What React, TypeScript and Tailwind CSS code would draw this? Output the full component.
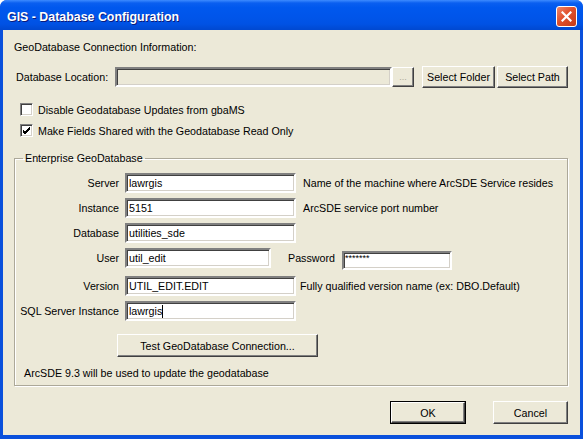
import React from "react";

const sunken =
  "border-2 border-t-[#808080] border-l-[#808080] border-b-white border-r-white shadow-[inset_1px_1px_0_#404040,inset_-1px_-1px_0_#d4d0c8]";
const raised =
  "border border-t-white border-l-white border-b-[#404040] border-r-[#404040] shadow-[inset_-1px_-1px_0_#808080] bg-[#ece9d8]";

function Check({ checked }: { checked?: boolean }) {
  return (
    <div className={`w-[13px] h-[13px] bg-white border border-t-[#808080] border-l-[#808080] border-b-white border-r-white shadow-[inset_1px_1px_0_#404040,inset_-1px_-1px_0_#d4d0c8] flex items-center justify-center shrink-0`}>
      {checked && (
        <svg width="9" height="9" viewBox="0 0 9 9">
          <path d="M1 4 L3 6 L8 1 M1 5 L3 7 L8 2 M1 6 L3 8 L8 3" stroke="#000" strokeWidth="1" fill="none" />
        </svg>
      )}
    </div>
  );
}

function Field({
  label,
  value,
  width = "w-[171px]",
  help,
  helpMl = "ml-[7px]",
  cursor,
  children,
}: {
  label: string;
  value: string;
  width?: string;
  help?: string;
  helpMl?: string;
  cursor?: boolean;
  children?: React.ReactNode;
}) {
  return (
    <div className="flex items-center h-[20px]">
      <div className="w-[104px] text-right pr-0">{label}</div>
      <div className={`ml-[6px] ${width} h-[20px] bg-white ${sunken} flex items-center pl-[2px] text-black`}>
        <span>{value}</span>
        {cursor && <span className="inline-block w-[1px] h-[13px] bg-black" />}
      </div>
      {help && <div className={helpMl}>{help}</div>}
      {children}
    </div>
  );
}

export default function App() {
  return (
    <div
      className="w-[583px] h-[439px] flex flex-col bg-[#0a50dc] rounded-t-[7px] overflow-hidden text-[10.7px] leading-[14px] text-black"
      style={{ fontFamily: "'Liberation Sans', Arial, sans-serif" }}
    >
      {/* title bar */}
      <div className="h-[30px] shrink-0 flex items-center justify-between pl-[7px] pr-[6px] pt-[3px] bg-[linear-gradient(to_bottom,#3d8bff_0%,#0a5ff0_10%,#0058ee_25%,#0055ea_55%,#0052e4_80%,#0048d0_100%)]">
        <span className="text-white font-bold text-[12.4px] [text-shadow:1px_1px_0_#0a1a7a]">
          GIS - Database Configuration
        </span>
        <div className="w-[21px] h-[21px] rounded-[3px] border border-white bg-[linear-gradient(135deg,#f0876a_0%,#e0502c_45%,#c53a18_100%)] flex items-center justify-center">
          <svg width="11" height="11" viewBox="0 0 11 11">
            <path d="M1.5 1.5 L9.5 9.5 M9.5 1.5 L1.5 9.5" stroke="white" strokeWidth="2.2" strokeLinecap="square" />
          </svg>
        </div>
      </div>

      {/* client area */}
      <div className="flex-1 mx-[3px] mb-[4px] bg-[#ece9d8] flex flex-col pl-[11px] pr-[12px]">
        <div className="pt-[10px]">GeoDatabase Connection Information:</div>

        <div className="flex items-center h-[22px] mt-[12px]">
          <div className="w-[101px] pl-[2px]">Database Location:</div>
          <div className={`w-[277px] h-[20px] ${sunken} bg-[#ece9d8]`} />
          <div className={`w-[22px] h-[20px] ${raised} flex items-center justify-center text-[#aca899] text-[9px]`}>...</div>
          <div className={`ml-[8px] w-[73px] h-[22px] ${raised} flex items-center justify-center`}>Select Folder</div>
          <div className={`ml-[2px] w-[71px] h-[22px] ${raised} flex items-center justify-center`}>Select Path</div>
        </div>

        <div className="flex items-center mt-[15px] pl-[6px] h-[13px]">
          <Check />
          <span className="ml-[5px]">Disable Geodatabase Updates from gbaMS</span>
        </div>
        <div className="flex items-center mt-[8px] pl-[6px] h-[13px]">
          <Check checked />
          <span className="ml-[5px]">Make Fields Shared with the Geodatabase Read Only</span>
        </div>

        <fieldset className="mt-[14px] border border-[#aca899] shadow-[1px_1px_0_white,inset_1px_1px_0_white] pb-[5px] min-w-0">
          <legend className="ml-[8px] px-[2px] leading-[14px]">Enterprise GeoDatabase</legend>
          <div className="flex flex-col pt-[8px]">
            <Field label="Server" value="lawrgis" help="Name of the machine where ArcSDE Service resides" />
            <div className="h-[5px]" />
            <Field label="Instance" value="5151" help="ArcSDE service port number" />
            <div className="h-[5px]" />
            <Field label="Database" value="utilities_sde" />
            <div className="h-[5px]" />
            <Field label="User" value="util_edit" width="w-[146px]">
              <div className="ml-[17px] w-[54px]">Password</div>
              <div className={`w-[110px] h-[19px] mt-[3px] bg-white ${sunken} text-[9px] leading-[9px] pl-[1px] pt-[1px] self-start`}>*******</div>
            </Field>
            <div className="h-[8px]" />
            <Field label="Version" value="UTIL_EDIT.EDIT" help="Fully qualified version name (ex: DBO.Default)" helpMl="ml-[4px]" />
            <div className="h-[5px]" />
            <Field label="SQL Server Instance" value="lawrgis" cursor />
            <div className={`ml-[102px] mt-[13px] w-[201px] h-[23px] ${raised} flex items-center justify-center`}>
              Test GeoDatabase Connection...
            </div>
            <div className="mt-[9px] pl-[9px]">ArcSDE 9.3 will be used to update the geodatabase</div>
          </div>
        </fieldset>

        <div className="flex justify-end mt-[15px]">
          <div className="w-[76px] h-[23px] border border-black flex">
            <div className={`flex-1 ${raised} flex items-center justify-center`}>OK</div>
          </div>
          <div className={`ml-[27px] w-[75px] h-[23px] ${raised} flex items-center justify-center`}>Cancel</div>
        </div>
      </div>
    </div>
  );
}
